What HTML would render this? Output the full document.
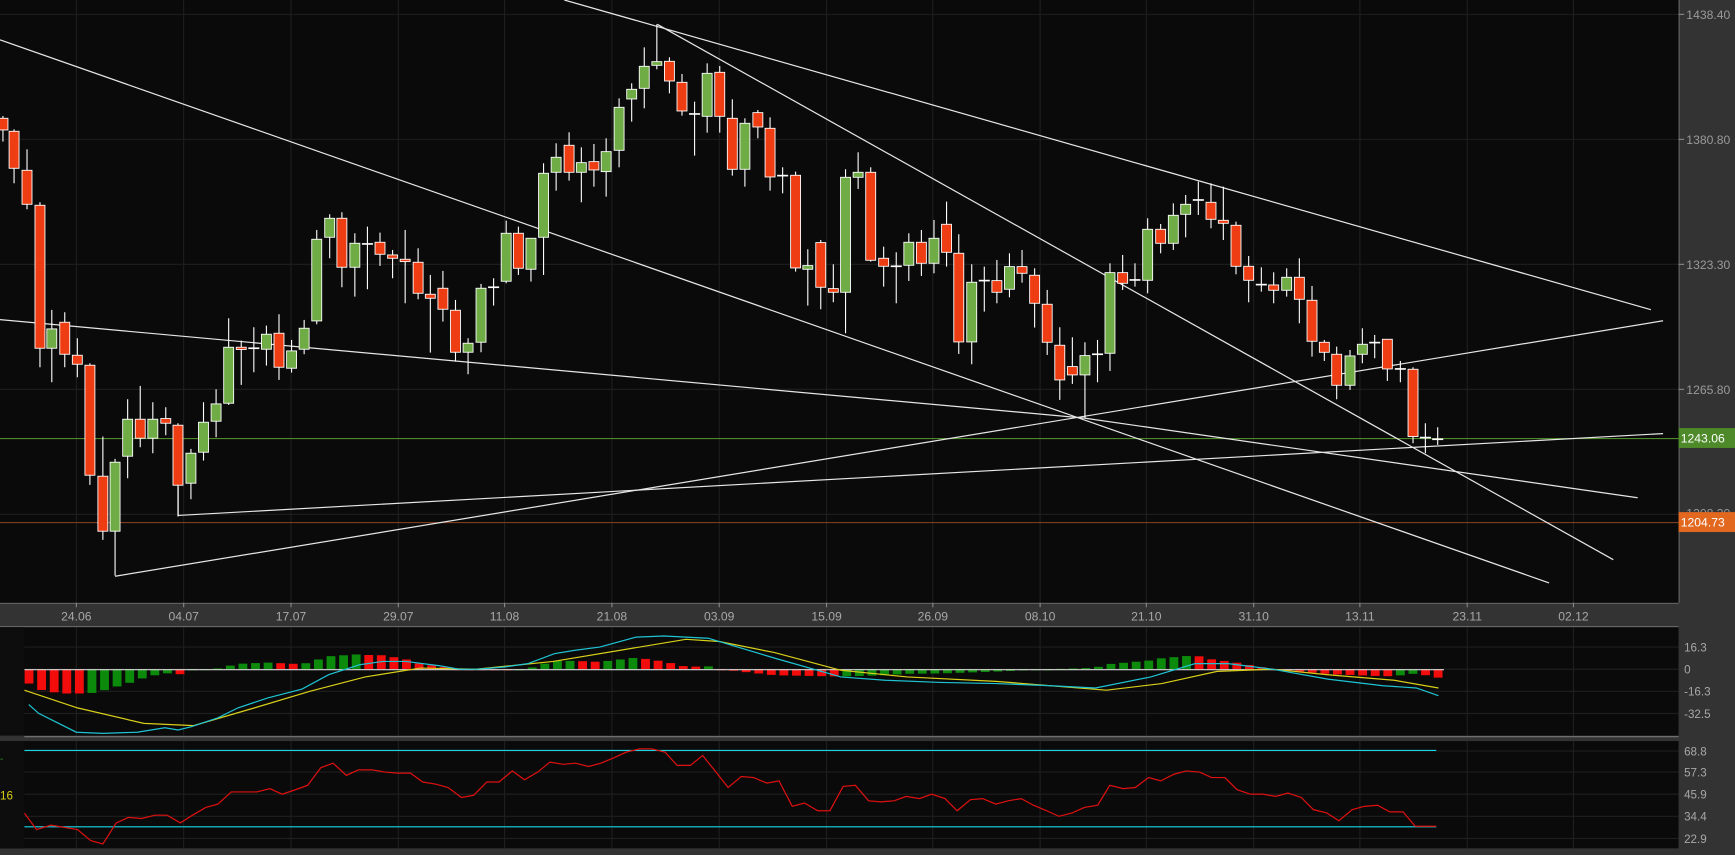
<!DOCTYPE html>
<html><head><meta charset="utf-8"><style>
html,body{margin:0;padding:0;background:#0a0a0a;overflow:hidden}
svg{display:block}
text{font-family:"Liberation Sans",sans-serif}
</style></head><body>
<svg id="s" width="1735" height="855" viewBox="0 0 1568 773" preserveAspectRatio="none" xmlns="http://www.w3.org/2000/svg">
<rect width="1568" height="773" fill="#0a0a0a"/>
<g id="grid"></g>
<g id="lines"></g>
<g id="candles"></g>
<g id="macd"></g>
<g id="rsi"></g>
<g id="axes"></g>
</svg>
<script>
(function(){
var NS="http://www.w3.org/2000/svg";
function el(p,t,a,txt){var e=document.createElementNS(NS,t);for(var k in a)e.setAttribute(k,a[k]);if(txt!==undefined)e.textContent=txt;document.getElementById(p).appendChild(e);return e;}
var dates=[[69,"24.06"],[166,"04.07"],[263,"17.07"],[360,"29.07"],[456,"11.08"],[553,"21.08"],[650,"03.09"],[747,"15.09"],[843,"26.09"],[940,"08.10"],[1036,"21.10"],[1133,"31.10"],[1229,"13.11"],[1326,"23.11"],[1422,"02.12"]];
[13,126,239,352,465].forEach(function(y){el("grid","line",{x1:0,x2:1517,y1:y,y2:y,stroke:"#1f1f1f","stroke-width":1});});
[585,605,625,645].forEach(function(y){el("grid","line",{x1:22,x2:1517,y1:y,y2:y,stroke:"#1f1f1f"});});
[679,698,718,738,758].forEach(function(y){el("grid","line",{x1:22,x2:1517,y1:y,y2:y,stroke:"#1f1f1f"});});
dates.forEach(function(d){el("grid","line",{x1:d[0],x2:d[0],y1:0,y2:773,stroke:"#1f1f1f"});});
el("lines","line",{x1:0,x2:1517,y1:396.5,y2:396.5,stroke:"#4f8a2a","stroke-width":1});
el("lines","line",{x1:0,x2:1517,y1:472.5,y2:472.5,stroke:"#8a4526","stroke-width":1});
var tl=[[0,36,1400,527],[510,0,1492,280],[594,22,1458,506],[0,289,980,378],[980,378,1480,450],[104,521,1503,290],[161,466,1503,392],[161,440,161,466]];
tl.forEach(function(l){el("lines","line",{x1:l[0],y1:l[1],x2:l[2],y2:l[3],stroke:"#e6e6e6","stroke-width":1.1});});
var z3=[[8,115,150,108,185,'r'],[38,154,265,148,310,'r'],[73,271,373,208,388,'r'],[108,376,805,367,862,'r'],[140,747,805,690,907,'g'],[175,727,823,697,862,'r'],[209,826,853,775,892,'r'],[243,856,1186,850,1215,'r'],[278,1189,1354,1070,1380,'r'],[311,1147,1354,1137,1487,'g'],[345,1018,1129,958,1195,'g'],[379,1018,1075,918,1102,'r'],[413,1018,1075,967,1120,'g'],[448,1016,1030,982,1066,'r'],[481,1036,1216,1030,1310,'r'],[516,1120,1210,1107,1258,'g'],[550,1027,1117,967,1142,'g'],[584,972,1024,928,1072,'g'],[618,802,970,715,975,'g'],[652,802,807,782,915,'r'],[686,805,805,742,877,'d'],[720,763,808,737,857,'g'],[754,760,862,703,900,'r'],[788,813,865,780,878,'g'],[822,745,808,720,823,'g'],[856,478,723,450,733,'g'],[891,415,472,403,535,'g'],[924,415,562,397,622,'r'],[959,490,562,460,650,'g'],[993,492,492,440,628,'d'],[1027,487,523,458,558,'r'],[1061,525,535,510,595,'r'],[1095,538,545,450,670,'r'],[1130,547,640,505,658,'r'],[1163,643,655,585,818,'r'],[1197,625,688,573,725,'r'],[1231,691,817,660,845,'r'],[1265,790,817,775,883,'g'],[1300,625,787,612,817,'g'],[1334,622,622,595,677,'d'],[1368,460,604,422,610,'g'],[1401,460,565,440,585,'r'],[1435,475,568,475,605,'g'],[1469,280,472,250,585,'g'],[1503,232,277,190,332,'g'],[1538,196,277,157,302,'r']];
var z4=[[58,488,517,442,607,'g'],[92,485,510,432,560,'r'],[125,455,515,415,590,'g'],[160,322,451,295,502,'g'],[194,268,297,250,365,'g'],[228,199,265,142,325,'g'],[262,185,196,73,208,'g'],[296,184,243,172,280,'r'],[330,247,333,222,347,'r'],[364,342,342,305,467,'d'],[398,220,349,190,398,'g'],[432,217,349,198,398,'r'],[466,355,508,298,527,'r'],[500,370,508,355,560,'g'],[535,338,381,330,415,'r'],[568,385,531,352,572,'r'],[602,527,527,502,580,'d'],[637,526,804,515,815,'r'],[670,797,808,748,917,'g'],[705,728,862,720,928,'r'],[739,866,877,793,907,'r'],[772,532,877,508,1000,'g'],[806,517,532,457,567,'g'],[840,517,781,502,785,'r'],[875,775,799,740,860,'r'],[909,799,799,757,910,'d'],[943,727,796,700,843,'g'],[977,727,790,690,828,'r'],[1011,715,790,660,820,'g'],[1045,673,757,605,800,'r'],[1078,760,1026,703,1062,'r'],[1113,847,1026,793,1093,'g'],[1147,842,842,800,935,'d'],[1181,842,877,780,910,'r'],[1215,800,868,760,892,'g'],[1249,800,820,750,848,'r'],[1283,826,910,805,983,'r'],[1317,913,1027,870,1065,'r'],[1351,1036,1140,982,1200,'r'],[1385,1100,1125,1012,1152,'r'],[1419,1067,1125,1027,1255,'g'],[1453,1063,1063,1020,1147,'d']];
var z5=[[30,368,610,340,663,'g'],[68,368,400,315,420,'r'],[105,390,390,340,410,'d'],[143,238,391,205,430,'g'],[182,238,280,222,310,'r'],[220,196,280,160,300,'g'],[257,163,193,135,262,'g'],[295,150,150,95,195,'d'],[333,157,208,100,235,'r'],[370,211,220,110,270,'r'],[408,226,349,215,373,'r'],[446,349,391,318,457,'r'],[484,404,404,352,425,'d'],[521,405,421,367,460,'r'],[560,382,421,355,440,'g'],[598,382,448,325,520,'r'],[636,451,574,408,620,'r'],[673,577,607,570,633,'r'],[710,613,706,590,748,'r'],[750,618,706,600,720,'g'],[787,583,613,535,640,'g'],[824,578,578,555,625,'d'],[862,568,657,568,693,'r'],[901,657,657,633,697,'d'],[939,658,860,652,880,'r'],[976,863,863,820,910,'d'],[1013,868,868,832,885,'d']];
var C=[];
z3.forEach(function(c){C.push([c[0]*0.3344,72.3+c[1]*0.3013,72.3+c[2]*0.3013,72.3+c[3]*0.3013,72.3+c[4]*0.3013,c[5]]);});
z4.forEach(function(c){C.push([506+c[0]*0.3344,c[1]*0.3013,c[2]*0.3013,c[3]*0.3013,c[4]*0.3013,c[5]]);});
z5.forEach(function(c){C.push([994.1+c[0]*0.3013,135.6+c[1]*0.3013,135.6+c[2]*0.3013,135.6+c[3]*0.3013,135.6+c[4]*0.3013,c[5]]);});
C.forEach(function(c){
 var x=c[0];
 el("candles","line",{x1:x,x2:x,y1:c[3],y2:c[4],stroke:"#fff","stroke-width":1});
 if(c[5]=='d'){el("candles","line",{x1:x-5,x2:x+5,y1:c[1],y2:c[1],stroke:"#fff","stroke-width":1.5});}
 else{var h=Math.max(c[2]-c[1],2);el("candles","rect",{x:x-4.5,y:c[1],width:9,height:h,fill:c[5]=='r'?"#ee3d12":"#6fac45",stroke:"#fff","stroke-width":0.8});}
});
var cy=[[0,632],[26,637],[35,645],[69,662],[93,663],[124,662],[149,658],[161,660],[173,657],[197,649],[215,640],[242,631],[273,623],[297,610],[325,601],[346,598],[367,598],[398,602],[415,605],[432,605],[456,603],[477,600],[501,591],[519,588],[542,585],[575,576],[600,575],[640,577],[700,595],[760,612],[800,615],[850,617],[900,618],[950,620],[990,622],[1040,612],[1080,600],[1110,600],[1150,605],[1200,614],[1250,620],[1280,622],[1300,629]];
var yl=[[0,622],[22,624],[70,640],[130,654],[175,656],[230,640],[280,625],[330,612],[380,604],[430,605],[500,598],[560,588],[620,578],[650,580],[700,590],[760,606],[820,612],[900,616],[1000,624],[1050,618],[1100,607],[1150,605],[1200,610],[1260,615],[1300,622]];
function interp(a,x){for(var i=1;i<a.length;i++){if(x<=a[i][0]){var t=(x-a[i-1][0])/(a[i][0]-a[i-1][0]);return a[i-1][1]+t*(a[i][1]-a[i-1][1]);}}return a[a.length-1][1];}
var prev=0,pcol="#f20c0c";
for(var x=3.5;x<1300;x+=11.37){
 if(x<26)continue;
 var v=(interp(yl,x)-interp(cy,x))*1.1; v=Math.max(-22,Math.min(22,v));
 var col=v>prev+0.01?"#0c8a0c":(v<prev-0.01?"#f20c0c":pcol); prev=v; pcol=col;
 var ty=v>0?605-v:605, hh=Math.max(Math.abs(v),1);
 el("macd","rect",{x:x-4,y:ty,width:8,height:hh,fill:col});
}
el("macd","line",{x1:22,x2:1305,y1:605.5,y2:605.5,stroke:"#d8d8d8","stroke-width":1});
el("macd","polyline",{points:yl.filter(function(p){return p[0]>=22}).map(function(p){return p.join(",")}).join(" "),fill:"none",stroke:"#d9cf1a","stroke-width":1.1});
el("macd","polyline",{points:cy.filter(function(p){return p[0]>=22}).map(function(p){return p.join(",")}).join(" "),fill:"none",stroke:"#1fc3d3","stroke-width":1.1});
el("rsi","line",{x1:22,x2:1298,y1:678.5,y2:678.5,stroke:"#19d6e6","stroke-width":1});
el("rsi","line",{x1:22,x2:1298,y1:747.5,y2:747.5,stroke:"#19d6e6","stroke-width":1});
var rp="22,735 33,750 46,746 58,748 70,750 82,760 93,763 105,744 116,739 128,740 140,737 151,737 163,744 174,737 186,730 197,727 209,716 221,716 232,716 244,713 255,718 267,714 278,710 290,694 301,690 313,701 324,696 336,696 348,698 359,699 371,699 382,707 394,709 405,712 417,721 428,719 440,707 451,707 463,697 474,705 486,698 497,689 509,691 520,690 532,693 543,690 555,685 566,680 578,677 589,677 601,680 612,692 624,692 635,683 647,698 658,712 670,702 681,703 693,708 704,706 716,729 727,726 739,733 750,733 762,711 773,710 785,724 796,725 808,724 819,720 831,722 842,718 854,722 865,733 877,723 888,722 900,727 911,724 923,722 934,728 946,733 957,738 969,735 980,730 992,728 1003,710 1015,713 1026,712 1038,703 1049,706 1061,700 1072,697 1084,698 1095,703 1107,703 1118,714 1130,718 1141,718 1153,720 1164,717 1176,721 1187,732 1199,735 1210,742 1222,732 1233,729 1245,728 1256,734 1268,734 1279,747 1298,747";
el("rsi","polyline",{points:rp,fill:"none",stroke:"#e01010","stroke-width":1.1});
var A="axes";
el(A,"rect",{x:1517,y:0,width:51,height:773,fill:"#333"});
el(A,"rect",{x:0,y:545,width:1568,height:22,fill:"#333"});
el(A,"line",{x1:0,x2:1517,y1:545.5,y2:545.5,stroke:"#666"});
el(A,"line",{x1:0,x2:1517,y1:566.5,y2:566.5,stroke:"#666"});
el(A,"line",{x1:1517.5,x2:1517.5,y1:0,y2:545,stroke:"#666"});
el(A,"rect",{x:0,y:665,width:1568,height:5,fill:"#333"});
el(A,"line",{x1:22,x2:1517,y1:666,y2:666,stroke:"#777"});
el(A,"rect",{x:0,y:767,width:1568,height:6,fill:"#333"});
el(A,"rect",{x:0,y:567,width:22,height:98,fill:"#0d0d0d"});
el(A,"rect",{x:0,y:670,width:22,height:97,fill:"#0d0d0d"});
[[13,"1438.40"],[126,"1380.80"],[239,"1323.30"],[352,"1265.80"]].forEach(function(p){
 el(A,"line",{x1:1517,x2:1522,y1:p[0],y2:p[0],stroke:"#888"});
 el(A,"text",{x:1524,y:p[0]+4,"font-size":"11",fill:"#9a9a9a"},p[1]);});
el(A,"text",{x:1524,y:468,"font-size":"11",fill:"#9a9a9a"},"1208.30");
el(A,"rect",{x:1517,y:387,width:51,height:18,fill:"#4e8a29"});
el(A,"text",{x:1519,y:400,"font-size":"11",fill:"#fff"},"1243.06");
el(A,"rect",{x:1517,y:463,width:51,height:18,fill:"#e2671f"});
el(A,"text",{x:1519,y:476,"font-size":"11",fill:"#fff"},"1204.73");
dates.forEach(function(d){el(A,"line",{x1:d[0],x2:d[0],y1:545,y2:549,stroke:"#888"});el(A,"text",{x:d[0],y:561,"font-size":"11",fill:"#a8a8a8","text-anchor":"middle"},d[1]);});
[[589,"16.3"],[609,"0"],[629,"-16.3"],[649,"-32.5"]].forEach(function(p){el(A,"text",{x:1522,y:p[0],"font-size":"10.5",fill:"#a8a8a8"},p[1]);});
[[683,"68.8"],[702,"57.3"],[722,"45.9"],[742,"34.4"],[762,"22.9"]].forEach(function(p){el(A,"text",{x:1522,y:p[0],"font-size":"10.5",fill:"#a8a8a8"},p[1]);});
el(A,"text",{x:0,y:723,"font-size":"10.5",fill:"#d9cf1a"},"16");
el(A,"text",{x:0,y:689,"font-size":"9",fill:"#2a9a2a"},"-");
})();
</script>
</body></html>
